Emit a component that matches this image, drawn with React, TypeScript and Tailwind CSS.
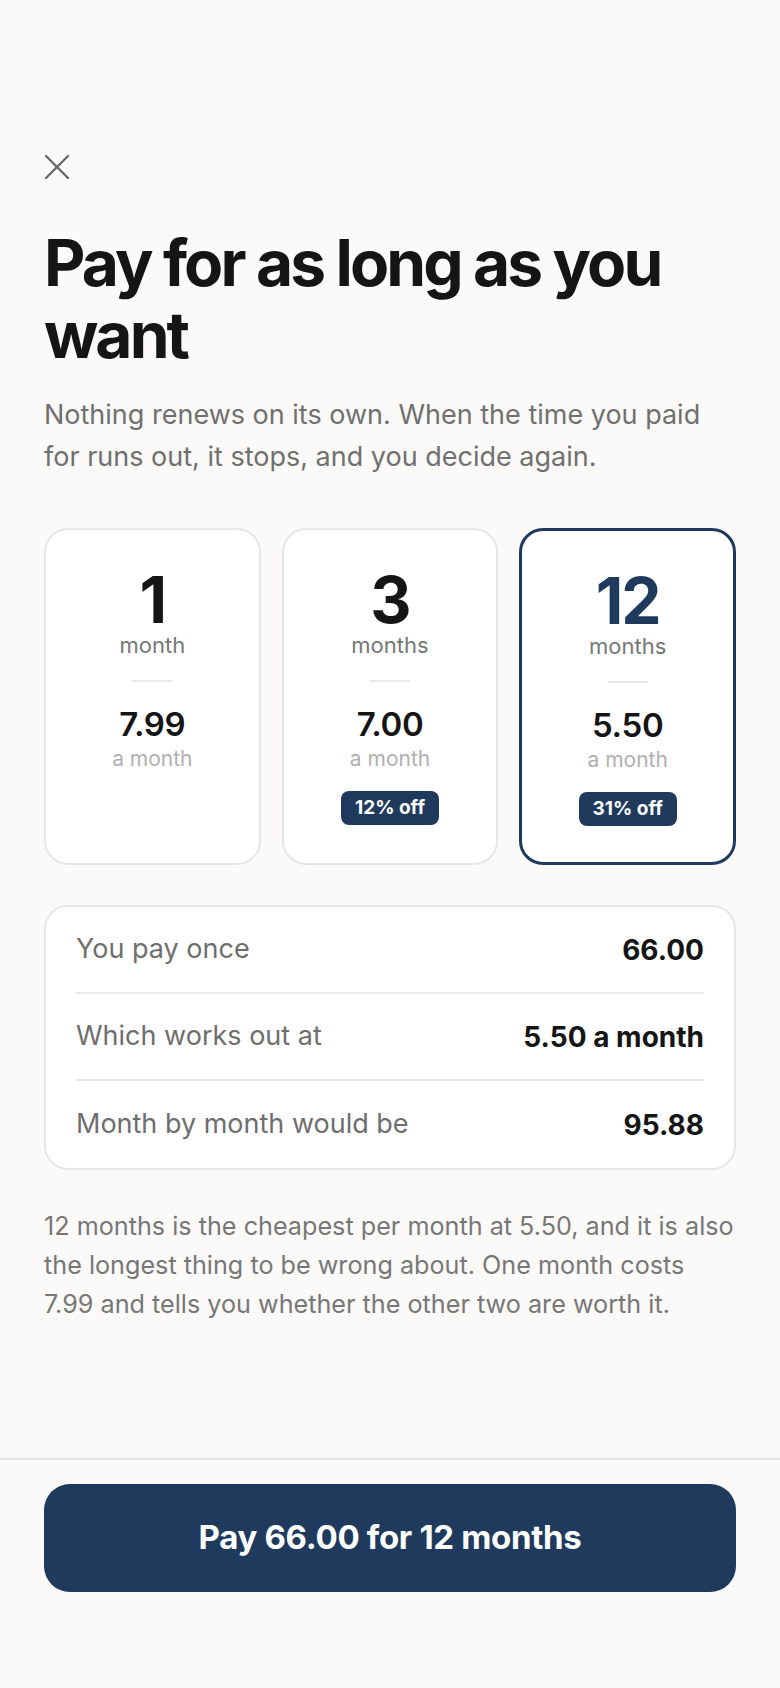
import React, { useState } from "react";

type Plan = {
    months: number;
    unit: string;
    perMonth: string;
    total: string;
    off?: string;
};

const plans: Plan[] = [
    { months: 1, unit: "month", perMonth: "7.99", total: "7.99" },
    { months: 3, unit: "months", perMonth: "7.00", total: "21.00", off: "12% off" },
    { months: 12, unit: "months", perMonth: "5.50", total: "66.00", off: "31% off" },
];

const CloseIcon: React.FC = () => (
    <svg width="26" height="26" viewBox="0 0 26 26" fill="none" stroke="#6b6b6b" strokeWidth="2.4" strokeLinecap="round">
        <path d="M2 2 L24 24" />
        <path d="M24 2 L2 24" />
    </svg>
);

const PlanCard: React.FC<{ plan: Plan; selected: boolean; onPick: () => void }> = ({ plan, selected, onPick }) => {
    return (
        <button
            type="button"
            onClick={onPick}
            className={
                selected
                    ? "flex flex-col items-center rounded-[24px] border-[3px] border-[#1f3a5c] bg-white pt-[38px] pb-[36px] cursor-pointer"
                    : "flex flex-col items-center rounded-[24px] border-2 border-[#e8e6e3] bg-white pt-[38px] pb-[36px] cursor-pointer"
            }
        >
            <span
                className={
                    selected
                        ? "text-[64px] leading-[64px] font-bold tracking-[-0.03em] text-[#1f3a5c]"
                        : "text-[64px] leading-[64px] font-bold tracking-[-0.03em] text-[#151515]"
                }
            >
                {plan.months}
            </span>
            <span className="text-[22px] leading-[26px] text-[#777777]">{plan.unit}</span>
            <span className="mt-[22px] h-[2px] w-10 bg-[#ebe9e6]" />
            <span className="mt-[24px] text-[33px] leading-[36px] font-semibold tracking-[-0.01em] text-[#151515]">
                {plan.perMonth}
            </span>
            <span className="mt-1 text-[21px] leading-[26px] text-[#b0b0b0]">a month</span>
            {plan.off && (
                <span className="mt-[19px] rounded-[8px] bg-[#1f3a5c] px-[14px] h-[34px] flex items-center text-[19px] font-bold text-white">
                    {plan.off}
                </span>
            )}
        </button>
    );
};

const SummaryRow: React.FC<{ label: string; value: string; last?: boolean }> = ({ label, value, last }) => (
    <div
        className={
            last
                ? "flex h-[87px] items-center justify-between"
                : "flex h-[87px] items-center justify-between border-b-2 border-[#ebe9e6]"
        }
    >
        <span className="text-[27px] text-[#6e6e6e]">{label}</span>
        <span className="text-[28px] font-bold text-[#151515]">{value}</span>
    </div>
);

const App: React.FC = () => {
    const [picked, setPicked] = useState(2);
    const plan = plans[picked];

    return (
        <div className="min-h-[1688px] flex flex-col bg-[#fbfaf8] font-['Inter',sans-serif]">
            <div className="flex-1 px-11 pt-[154px]">
                <button type="button" className="block">
                    <CloseIcon />
                </button>

                <h1 className="mt-[47px] text-[64px] leading-[72px] font-bold tracking-[-0.045em] text-[#151515]">
                    Pay for as long as you want
                </h1>
                <p className="mt-[23px] text-[27px] leading-[42px] text-[#707070]">
                    Nothing renews on its own. When the time you paid for runs out, it stops, and you decide again.
                </p>

                <div className="mt-[50px] grid grid-cols-3 gap-[21px]">
                    {plans.map((p, i) => (
                        <PlanCard key={p.months} plan={p} selected={i === picked} onPick={() => setPicked(i)} />
                    ))}
                </div>

                <div className="mt-[40px] rounded-[24px] border-2 border-[#e8e6e3] bg-white px-[30px]">
                    <SummaryRow label="You pay once" value={plan.total} />
                    <SummaryRow label="Which works out at" value={plan.perMonth + " a month"} />
                    <SummaryRow label="Month by month would be" value="95.88" last />
                </div>

                <p className="mt-[37px] text-[25.2px] leading-[39px] text-[#777777]">
                    12 months is the cheapest per month at 5.50, and it is also the longest thing to be wrong about. One
                    month costs 7.99 and tells you whether the other two are worth it.
                </p>
            </div>

            <div className="border-t-2 border-[#e6e4e1] px-11 pt-[24px] pb-[96px]">
                <button
                    type="button"
                    className="w-full h-[108px] rounded-[26px] bg-[#1f3a5c] text-[33px] font-bold tracking-[-0.01em] text-white"
                >
                    Pay {plan.total} for {plan.months} {plan.unit}
                </button>
            </div>
        </div>
    );
};

export default App;
